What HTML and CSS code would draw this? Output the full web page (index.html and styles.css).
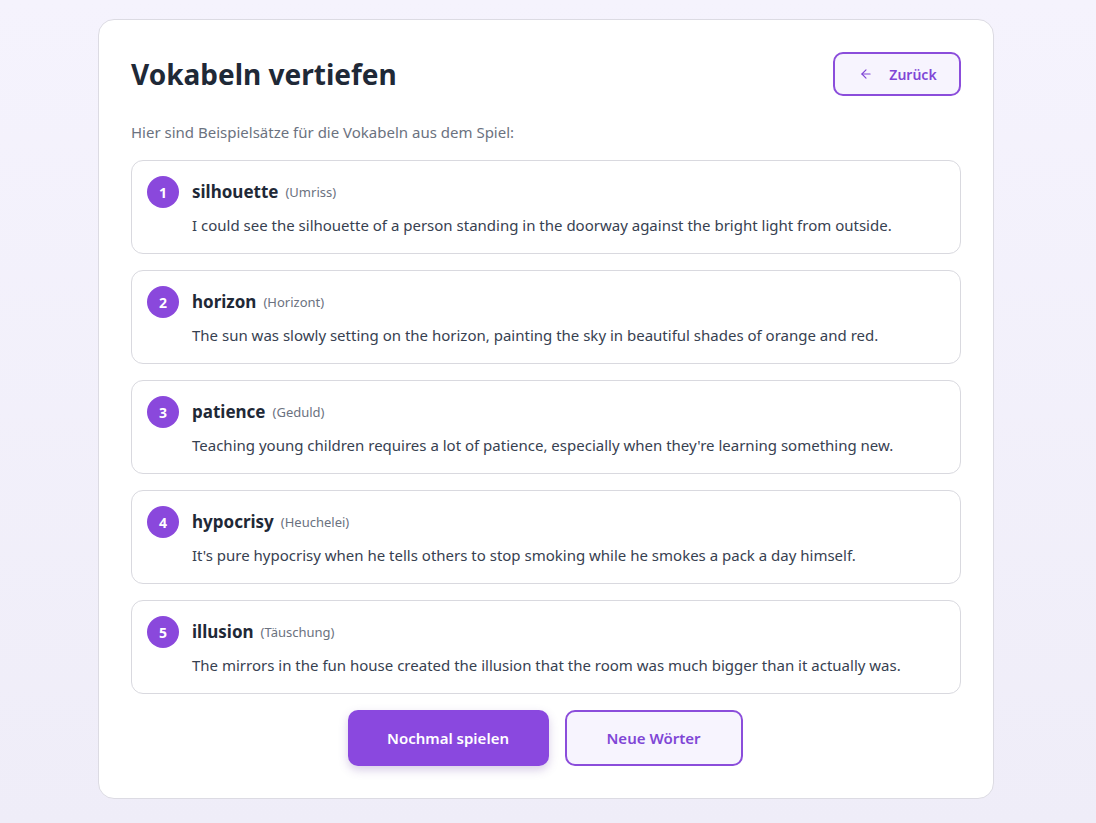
FILE: index.html
```html
<!DOCTYPE html>
<html lang="de">
<head>
<meta charset="utf-8">
<title>Vokabeln vertiefen</title>
<link rel="stylesheet" href="styles.css">
</head>
<body>
<main class="card">
  <header class="head">
    <h1 class="title">Vokabeln vertiefen</h1>
    <button class="back">
      <svg class="back-icon" viewBox="0 0 24 24" width="16" height="16" fill="none" stroke="currentColor" stroke-width="2" stroke-linecap="round" stroke-linejoin="round"><path d="M19 12H5"/><path d="M12 19l-7-7 7-7"/></svg>
      <span>Zurück</span>
    </button>
  </header>
  <p class="intro">Hier sind Beispielsätze für die Vokabeln aus dem Spiel:</p>
  <ol class="list">
    <li class="item">
      <span class="num">1</span>
      <div class="body">
        <div class="word-row"><span class="word">silhouette</span><span class="trans">(Umriss)</span></div>
        <p class="sentence">I could see the silhouette of a person standing in the doorway against the bright light from outside.</p>
      </div>
    </li>
    <li class="item">
      <span class="num">2</span>
      <div class="body">
        <div class="word-row"><span class="word">horizon</span><span class="trans">(Horizont)</span></div>
        <p class="sentence">The sun was slowly setting on the horizon, painting the sky in beautiful shades of orange and red.</p>
      </div>
    </li>
    <li class="item">
      <span class="num">3</span>
      <div class="body">
        <div class="word-row"><span class="word">patience</span><span class="trans">(Geduld)</span></div>
        <p class="sentence">Teaching young children requires a lot of patience, especially when they're learning something new.</p>
      </div>
    </li>
    <li class="item">
      <span class="num">4</span>
      <div class="body">
        <div class="word-row"><span class="word">hypocrisy</span><span class="trans">(Heuchelei)</span></div>
        <p class="sentence">It's pure hypocrisy when he tells others to stop smoking while he smokes a pack a day himself.</p>
      </div>
    </li>
    <li class="item">
      <span class="num">5</span>
      <div class="body">
        <div class="word-row"><span class="word">illusion</span><span class="trans">(Täuschung)</span></div>
        <p class="sentence">The mirrors in the fun house created the illusion that the room was much bigger than it actually was.</p>
      </div>
    </li>
  </ol>
  <div class="actions">
    <button class="btn primary">Nochmal spielen</button>
    <button class="btn secondary">Neue Wörter</button>
  </div>
</main>
</body>
</html>
```
FILE: styles.css
```css
* { box-sizing: border-box; }
html, body { margin: 0; }
body {
  min-height: 823px;
  background: linear-gradient(180deg, #f5f3fd 0%, #efedf8 100%);
  font-family: "Noto Sans", "Open Sans", sans-serif;
  color: #1f2937;
  padding: 19px 0 24px;
}
.card {
  width: 896px;
  margin: 0 auto;
  position: relative;
  left: -2px;
  background: #ffffff;
  border: 1px solid #dcdbe3;
  border-radius: 16px;
  padding: 32px 32px 32px;
}
.head {
  display: flex;
  justify-content: space-between;
  align-items: center;
  margin-bottom: 24px;
}
.title {
  margin: 0;
  font-size: 28px;
  font-weight: 700;
  color: #1f2937;
  line-height: 40px;
}
.back {
  display: flex;
  align-items: center;
  gap: 16px;
  width: 128px;
  height: 44px;
  justify-content: center;
  border: 2px solid #8b4ddb;
  border-radius: 10px;
  background: #f7f4fe;
  color: #8046d6;
  font-family: inherit;
  font-size: 14px;
  font-weight: 600;
  cursor: pointer;
  padding: 0 0 0 2px;
}
.back-icon { width: 14px; height: 14px; }
.intro {
  margin: 0 0 16px;
  font-size: 15px;
  line-height: 24px;
  color: #6b7280;
}
.list {
  list-style: none;
  margin: 0;
  padding: 0;
  display: flex;
  flex-direction: column;
  gap: 16px;
}
.item {
  display: flex;
  gap: 13px;
  border: 1px solid #d9d9df;
  border-radius: 12px;
  padding: 15px 15px 15px;
  height: 94px;
}
.num {
  flex: none;
  width: 32px;
  height: 32px;
  border-radius: 50%;
  background: #8a48dc;
  color: #fff;
  font-size: 14px;
  font-weight: 700;
  display: flex;
  align-items: center;
  justify-content: center;
}
.body { flex: 1; }
.word-row {
  height: 31px;
  display: flex;
  align-items: center;
  gap: 7px;
}
.word {
  font-size: 17px;
  font-weight: 700;
  color: #1f2937;
}
.trans {
  font-size: 13px;
  color: #6b7280;
}
.sentence {
  margin: 6px 0 0;
  font-size: 15px;
  line-height: 24px;
  color: #374151;
}
.actions {
  display: flex;
  justify-content: center;
  gap: 16px;
  margin-top: 16px;
  position: relative;
  left: -1px;
}
.btn {
  font-family: inherit;
  font-size: 15px;
  font-weight: 600;
  height: 56px;
  border-radius: 10px;
  cursor: pointer;
}
.primary {
  width: 201px;
  background: #8a48df;
  color: #ffffff;
  border: none;
  box-shadow: 0 4px 10px rgba(100, 60, 160, 0.25);
}
.secondary {
  width: 178px;
  background: #f7f4fe;
  color: #8046d6;
  border: 2px solid #8b4ddb;
}
```
